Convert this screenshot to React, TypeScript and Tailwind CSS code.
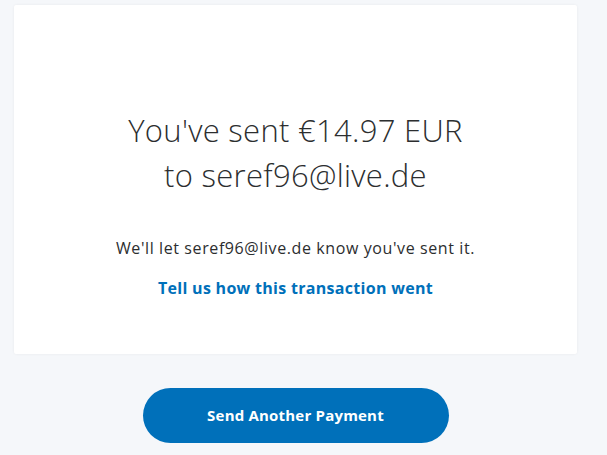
import React from "react";

const App = () => {
  return (
    <div className="min-h-[455px] w-full bg-[#f5f7fa] pt-[5px] font-['Open_Sans',sans-serif]">
      <div className="mx-[14px] w-[563px] h-[349px] bg-white rounded-[2px] shadow-[0_0_3px_rgba(0,0,0,0.06)] flex flex-col items-center">
        <h1 className="mt-[103px] text-center text-[31px] leading-[45px] font-light text-[#2c2e2f] tracking-[0.3px]">
          You've sent €14.97 EUR
          <br />
          to seref96@live.de
        </h1>
        <p className="mt-[40px] text-[16px] leading-[20px] text-[#2c2e2f] tracking-[0.6px]">
          We'll let seref96@live.de know you've sent it.
        </p>
        <a className="mt-[20px] text-[16px] leading-[20px] font-bold text-[#0070ba] tracking-[0.3px]">
          Tell us how this transaction went
        </a>
      </div>
      <div className="mx-[14px] w-[563px] flex justify-center mt-[34px]">
        <button className="w-[306px] h-[55px] rounded-full bg-[#0070ba] text-white text-[15px] font-bold tracking-[0.2px]">
          Send Another Payment
        </button>
      </div>
    </div>
  );
};

export default App;
